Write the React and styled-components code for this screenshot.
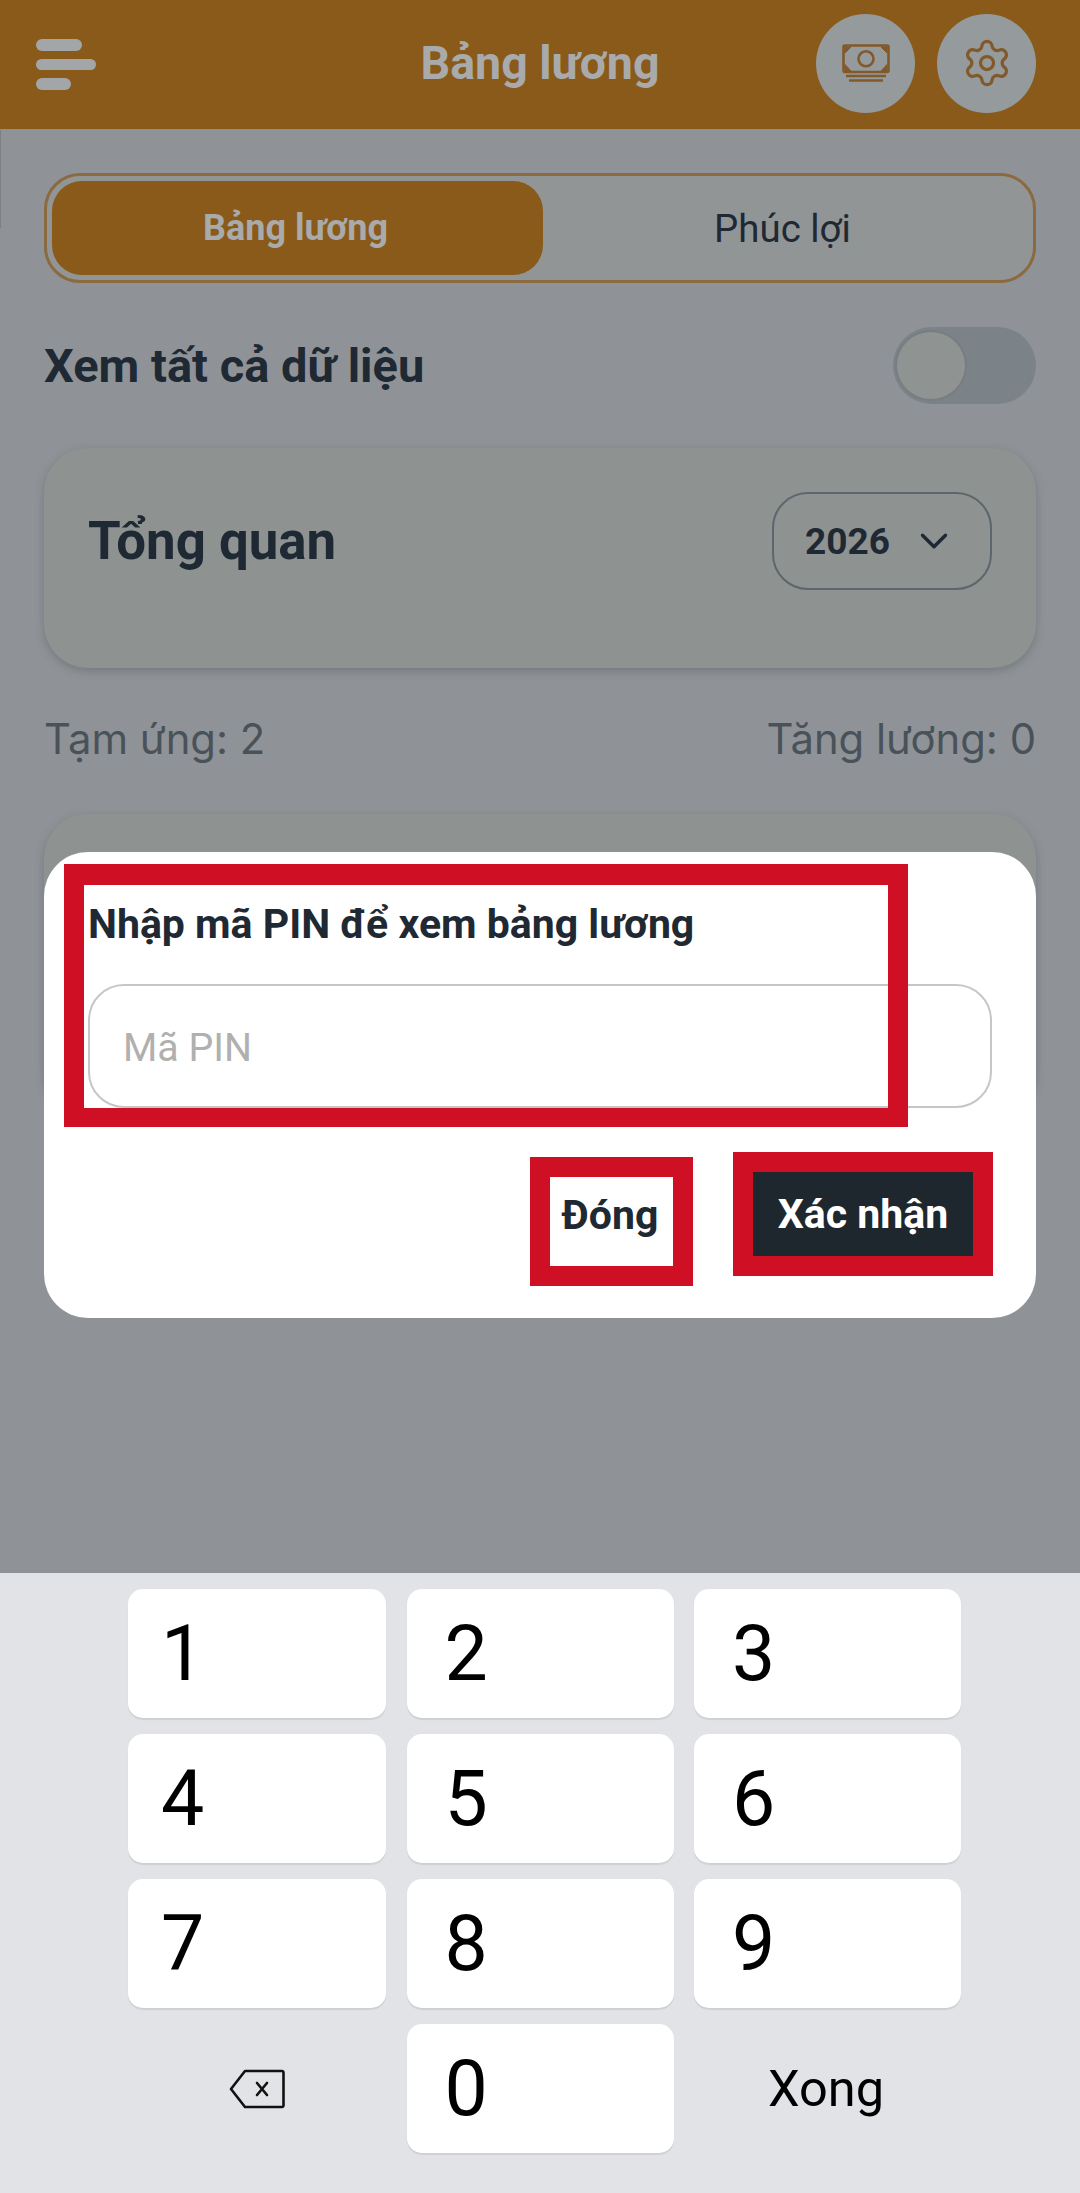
import React from "react";
import styled, { createGlobalStyle } from "styled-components";
import { ChevronDown, Settings } from "lucide-react";

const Global = createGlobalStyle`
  html, body { margin: 0; padding: 0; }
  body { font-family: Roboto, "Liberation Sans", sans-serif; background: #8f9397; }
  * { box-sizing: border-box; }
`;

const Screen = styled.div`
  position: relative;
  width: 1080px;
  height: 2193px;
  overflow: hidden;
  display: flex;
  flex-direction: column;
  background: #8f9397;
  color: #1f2933;
  &::before {
    content: "";
    position: absolute;
    left: 0;
    top: 130px;
    width: 1px;
    height: 98px;
    background: #7c8085;
  }
`;

const Header = styled.header`
  height: 130px;
  flex: none;
  display: grid;
  grid-template-columns: 1fr auto 1fr;
  align-items: center;
  padding: 0 44px 3px 36px;
  background: #8a5a1b;
  border-bottom: 1px solid #9a8f7d;
`;

const MenuIcon = styled.div`
  display: flex;
  flex-direction: column;
  gap: 8px;
  margin-top: 3px;
`;

const MenuBar = styled.span`
  display: block;
  width: ${(p) => p.$w}px;
  height: 11.5px;
  border-radius: 6px;
  background: #a3a6a8;
`;

const Title = styled.h1`
  margin: 0 0 0 8px;
  font-size: 46.5px;
  line-height: 50px;
  font-weight: 700;
  color: #a8aaab;
`;

const HeaderActions = styled.div`
  display: flex;
  justify-content: flex-end;
  gap: 22px;
`;

const RoundButton = styled.div`
  width: 99px;
  height: 99px;
  border-radius: 50%;
  background: #959a9c;
  color: #82592a;
  display: flex;
  align-items: center;
  justify-content: center;
`;

const Main = styled.main`
  flex: 1;
  padding: 43px 44px 0;
`;

const Segment = styled.div`
  height: 110px;
  display: grid;
  grid-template-columns: 491px 1fr;
  padding: 5px;
  border: 3px solid #8b6a3f;
  border-radius: 36px;
  background: #919595;
`;

const SegmentTab = styled.div`
  display: flex;
  align-items: center;
  justify-content: center;
  padding-right: ${(p) => (p.$active ? 4 : 6)}px;
  border-radius: 30px;
  font-size: ${(p) => (p.$active ? 36 : 38.4)}px;
  font-weight: ${(p) => (p.$active ? 700 : 400)};
  background: ${(p) => (p.$active ? "#8a5a1b" : "transparent")};
  color: ${(p) => (p.$active ? "#a8aaab" : "#1f2933")};
`;

const ToggleRow = styled.div`
  display: flex;
  align-items: center;
  justify-content: space-between;
  margin-top: 44px;
  height: 77px;
`;

const ToggleLabel = styled.div`
  font-size: 47px;
  font-weight: 700;
  color: #1f2933;
`;

const Track = styled.div`
  width: 143px;
  height: 77px;
  border-radius: 39px;
  background: #7b8388;
  padding: 5px 4px;
`;

const Thumb = styled.div`
  width: 68px;
  height: 67px;
  border-radius: 50%;
  background: #8f9392;
  box-shadow: 0 0 0 2px #777d81;
`;

const Card = styled.section`
  margin-top: ${(p) => p.$top}px;
  height: ${(p) => p.$h}px;
  padding: 44px 44px;
  border-radius: 44px;
  background: #8e9291;
  box-shadow: 0 3px 8px rgba(70, 75, 80, 0.35);
  display: flex;
  align-items: flex-start;
  justify-content: space-between;
`;

const CardTitle = styled.h2`
  margin: 7px 0 0;
  font-size: 52.8px;
  line-height: 84px;
  font-weight: 700;
  color: #1f2933;
`;

const YearSelect = styled.div`
  width: 220px;
  height: 98px;
  display: flex;
  align-items: center;
  gap: 21px;
  padding: 0 0 0 31px;
  border: 2px solid #5d666c;
  border-radius: 36px;
  font-size: 37px;
  font-weight: 700;
`;

const StatsRow = styled.div`
  display: flex;
  justify-content: space-between;
  margin-top: 46px;
  font-size: 41.8px;
  line-height: 50px;
  color: #4a5259;
  font-family: Inter, Roboto, sans-serif;
`;

const Modal = styled.div`
  position: absolute;
  left: 44px;
  top: 852px;
  width: 992px;
  height: 466px;
  padding: 47px 44px 0;
  border-radius: 44px;
  background: #fff;
`;

const ModalTitle = styled.div`
  font-size: 41px;
  line-height: 50px;
  font-weight: 700;
  color: #1f2933;
`;

const PinField = styled.div`
  margin-top: 35px;
  height: 124px;
  display: flex;
  align-items: center;
  padding: 4px 0 0 33px;
  border: 2.5px solid #c6c6c6;
  border-radius: 36px;
  font-size: 39.3px;
  color: #b0b0b0;
`;

const Actions = styled.div`
  display: flex;
  justify-content: flex-end;
  align-items: flex-start;
  gap: 40px;
  margin: 44px -1px 0 0;
`;

const ActionButton = styled.div`
  display: flex;
  align-items: center;
  justify-content: center;
  width: ${(p) => p.$w}px;
  height: ${(p) => p.$h}px;
  margin-top: ${(p) => p.$top || 0}px;
  padding: 0 ${(p) => p.$shift || 0}px ${(p) => p.$lift || 0}px 0;
  border: 20px solid #cf1024;
  font-size: 41px;
  font-weight: 700;
  background: ${(p) => (p.$dark ? "#1f272e" : "#fff")};
  color: ${(p) => (p.$dark ? "#fff" : "#1f2933")};
`;

const Highlight = styled.div`
  position: absolute;
  left: 20px;
  top: 12px;
  width: 844px;
  height: 263px;
  border: 20px solid #cf1024;
  border-top-width: 21px;
  border-bottom-width: 19px;
`;

const Keyboard = styled.div`
  position: absolute;
  left: 0;
  right: 0;
  bottom: 0;
  height: 620px;
  padding: 16px 0 0 128px;
  background: #e2e3e6;
  display: grid;
  grid-template-columns: 258px 267px 267px;
  grid-auto-rows: 129px;
  column-gap: 20.5px;
  row-gap: 16px;
`;

const Key = styled.div`
  display: flex;
  align-items: center;
  padding-left: ${(p) => p.$pad}px;
  border-radius: 15px;
  background: #fff;
  box-shadow: 0 2px 1px #cfd0d4;
  font-size: 77px;
  font-weight: 400;
  color: #000;
`;

const KeyPlain = styled.div`
  display: flex;
  align-items: center;
  justify-content: center;
  padding-right: ${(p) => p.$shift || 0}px;
  font-size: 50.5px;
  font-weight: 400;
  color: #000;
`;

const MoneyIcon = () => (
  <svg width="48" height="38" viewBox="0 0 48 38" fill="none" stroke="currentColor" strokeWidth="2.6">
    <rect x="1.5" y="1.5" width="45" height="26.5" rx="1.5" />
    <circle cx="24" cy="14.8" r="7.5" />
    <path d="M3 9 L9 3 H3 Z M45 9 L39 3 H45 Z M3 20.5 L9 27 H3 Z M45 20.5 L39 27 H45 Z" fill="currentColor" strokeWidth="1" />
    <path d="M4 32 H44 M7 36.5 H41" />
  </svg>
);

const BackspaceIcon = () => (
  <svg width="56" height="40" viewBox="0 0 56 40" fill="none" stroke="#111" strokeWidth="2.6" strokeLinejoin="round">
    <path d="M16 2 H53 a1.5 1.5 0 0 1 1.5 1.5 V36.5 a1.5 1.5 0 0 1 -1.5 1.5 H16 L2 20 Z" />
    <path d="M28 14 L38 26 M38 14 L28 26" strokeLinecap="round" />
  </svg>
);

const rows = [["1", "2", "3"], ["4", "5", "6"], ["7", "8", "9"]];
const pads = [33, 38, 38];

export default function App() {
  return (
    <Screen>
      <Global />
      <Header>
        <MenuIcon>
          <MenuBar $w={46} />
          <MenuBar $w={60} />
          <MenuBar $w={35} />
        </MenuIcon>
        <Title>Bảng lương</Title>
        <HeaderActions>
          <RoundButton><MoneyIcon /></RoundButton>
          <RoundButton><Settings size={52} strokeWidth={1.5} /></RoundButton>
        </HeaderActions>
      </Header>
      <Main>
        <Segment>
          <SegmentTab $active>Bảng lương</SegmentTab>
          <SegmentTab>Phúc lợi</SegmentTab>
        </Segment>
        <ToggleRow>
          <ToggleLabel>Xem tất cả dữ liệu</ToggleLabel>
          <Track><Thumb /></Track>
        </ToggleRow>
        <Card $top={44} $h={220}>
          <CardTitle>Tổng quan</CardTitle>
          <YearSelect>2026 <ChevronDown size={46} strokeWidth={1.8} /></YearSelect>
        </Card>
        <StatsRow>
          <span>Tạm ứng: 2</span>
          <span>Tăng lương: 0</span>
        </StatsRow>
        <Card $top={50} $h={300} />
      </Main>
      <Modal>
        <ModalTitle>Nhập mã PIN để xem bảng lương</ModalTitle>
        <PinField>Mã PIN</PinField>
        <Actions>
          <ActionButton $w={163} $h={129} $top={5} $lift={14} $shift={3}>Đóng</ActionButton>
          <ActionButton $w={260} $h={124} $dark>Xác nhận</ActionButton>
        </Actions>
        <Highlight />
      </Modal>
      <Keyboard>
        {rows.flat().map((d, i) => (
          <Key key={d} $pad={pads[i % 3]}>{d}</Key>
        ))}
        <KeyPlain><BackspaceIcon /></KeyPlain>
        <Key $pad={38}>0</Key>
        <KeyPlain $shift={3}>Xong</KeyPlain>
      </Keyboard>
    </Screen>
  );
}
